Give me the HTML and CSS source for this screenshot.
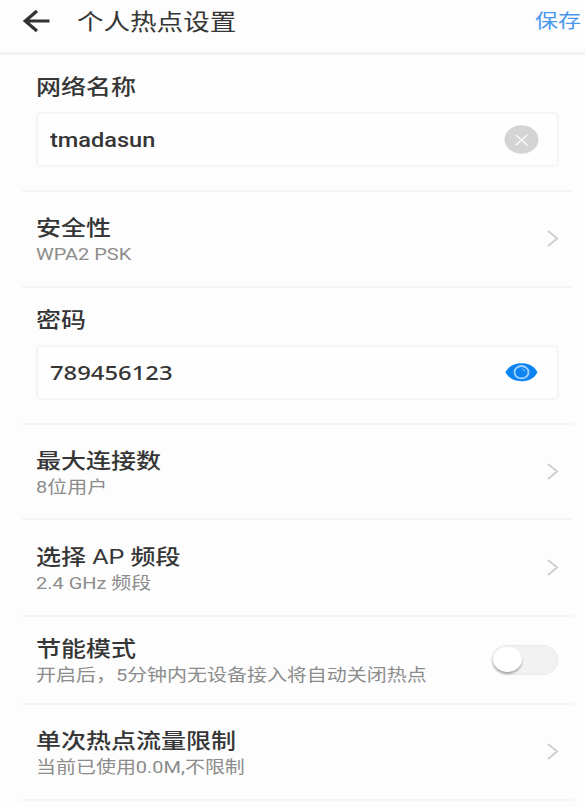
FILE: index.html
```html
<!DOCTYPE html>
<html lang="zh-CN">
<head>
<meta charset="utf-8">
<title>个人热点设置</title>
<link rel="stylesheet" href="styles.css">
</head>
<body>
<header class="bar">
  <svg class="back" width="28" height="24" viewBox="0 0 28 24"><path d="M27.5 12H4M15 2L3.2 12 15 22" fill="none" stroke="#333" stroke-width="3.2"/></svg>
  <h1 class="title"><span class="wide">个人热点设置</span></h1>
  <a class="save"><span class="wide">保存</span></a>
</header>
<main class="list">
  <section class="row field name">
    <div class="label"><span class="wide">网络名称</span></div>
    <div class="input"><span class="value latin wide">tmadasun</span>
      <svg width="36" height="30" viewBox="0 0 36 30"><ellipse cx="18.5" cy="14.5" rx="17" ry="14.3" fill="#d4d4d4"/><path d="M12.7 9.8l11.6 10.6M24.3 9.8L12.7 20.4" stroke="#f7f7f7" stroke-width="1.5"/></svg>
    </div>
  </section>
  <section class="row security">
    <div class="text"><div class="label"><span class="wide">安全性</span></div><div class="sub"><span class="wide">WPA2 PSK</span></div></div>
    <svg class="chevron" width="12" height="18" viewBox="0 0 12 18"><path d="M1 1l9.2 7.5L1 16" fill="none" stroke="#cdcdcd" stroke-width="1.8"/></svg>
  </section>
  <section class="row field password">
    <div class="label"><span class="wide">密码</span></div>
    <div class="input"><span class="value digits wide">789456123</span>
      <svg width="36" height="30" viewBox="0 0 36 30"><path d="M2.5 14.2C6 7.5 12 5.2 18.5 5.2S31 7.5 34.5 14.2C31 20.9 25 23.2 18.5 23.2S6 20.9 2.5 14.2Z" fill="#0d84f2"/><ellipse cx="18.5" cy="14.2" rx="7" ry="6.2" fill="none" stroke="#a5d2fa" stroke-width="1.8"/><path d="M19 11a3.4 2.8 0 0 1 3 2.6" fill="none" stroke="#7dbdf8" stroke-width="1"/></svg>
    </div>
  </section>
  <section class="row clients">
    <div class="text"><div class="label"><span class="wide">最大连接数</span></div><div class="sub"><span class="wide">8位用户</span></div></div>
    <svg class="chevron" width="12" height="18" viewBox="0 0 12 18"><path d="M1 1l9.2 7.5L1 16" fill="none" stroke="#cdcdcd" stroke-width="1.8"/></svg>
  </section>
  <section class="row band">
    <div class="text"><div class="label"><span class="wide">选择 <span class="ap">AP</span> 频段</span></div><div class="sub"><span class="wide">2.4 GHz 频段</span></div></div>
    <svg class="chevron" width="12" height="18" viewBox="0 0 12 18"><path d="M1 1l9.2 7.5L1 16" fill="none" stroke="#cdcdcd" stroke-width="1.8"/></svg>
  </section>
  <section class="row saving">
    <div class="text"><div class="label"><span class="wide">节能模式</span></div><div class="sub"><span class="wide">开启后，5分钟内无设备接入将自动关闭热点</span></div></div>
    <div class="toggle"><div class="knob"></div></div>
  </section>
  <section class="row limit">
    <div class="text"><div class="label"><span class="wide">单次热点流量限制</span></div><div class="sub"><span class="wide">当前已使用0.0M,不限制</span></div></div>
    <svg class="chevron" width="12" height="18" viewBox="0 0 12 18"><path d="M1 1l9.2 7.5L1 16" fill="none" stroke="#cdcdcd" stroke-width="1.8"/></svg>
  </section>
</main>
</body>
</html>
```
FILE: styles.css
```css
* { box-sizing: border-box; }
body {
  margin: 0;
  height: 807px;
  overflow: hidden;
  background: #fdfdfd;
  color: #363636;
  font-family: Roboto, "Noto Sans CJK SC", sans-serif;
}
svg { display: block; flex: none; }
.wide {
  display: inline-block;
  white-space: nowrap;
  transform: scaleX(1.19);
  transform-origin: left center;
}
.bar {
  display: flex;
  align-items: center;
  height: 55px;
  padding: 2px 4px 12px 22px;
  border-bottom: 3px solid #f2f2f2;
}
.title {
  flex: 1;
  margin: 0 0 0 27px;
  padding-top: 1px;
  font-size: 22.3px;
  line-height: 30px;
  font-weight: 400;
}
.save {
  width: 46px;
  padding-top: 2px;
  font-size: 19.3px;
  line-height: 30px;
  color: #4a98ee;
}
.list { margin: 0 12px 0 22px; }
.row {
  display: flex;
  align-items: center;
  justify-content: space-between;
  padding: 0 15px 0 14px;
  border-bottom: 2px solid #f5f5f5;
}
.field {
  flex-direction: column;
  align-items: stretch;
  justify-content: flex-start;
}
.name { height: 137px; padding-top: 18px; }
.security { height: 96px; }
.password { height: 137px; padding-top: 18px; }
.clients { height: 95px; }
.band { height: 97px; }
.saving { height: 88px; }
.limit { height: 96px; }
.text { padding-top: 1px; }
.label {
  font-size: 21px;
  line-height: 29px;
  font-weight: 500;
}
.ap { font-weight: 400; }
.sub {
  font-size: 16.8px;
  line-height: 22px;
  color: #8c8c8c;
}
.input {
  display: flex;
  align-items: center;
  justify-content: space-between;
  height: 55px;
  margin-top: 10px;
  margin-right: -1px;
  padding: 0 18px 0 12px;
  border: 2px solid #f4f4f4;
  border-radius: 5px;
  background: #fefefe;
}
.value { font-size: 20px; line-height: 28px; font-weight: 500; }
.latin { padding-top: 2px; font-size: 19.8px; }
.digits { font-family: "Noto Sans", sans-serif; }
.chevron { margin-right: -1px; }
.toggle {
  width: 67px;
  height: 30px;
  padding: 1px;
  border: 1px solid #e8e8e8;
  border-radius: 15px;
  background: #f2f2f2;
}
.knob {
  width: 29px;
  height: 25px;
  border-radius: 50%;
  background: #fff;
  box-shadow: 0 2px 2px rgba(0, 0, 0, .3);
}
```
